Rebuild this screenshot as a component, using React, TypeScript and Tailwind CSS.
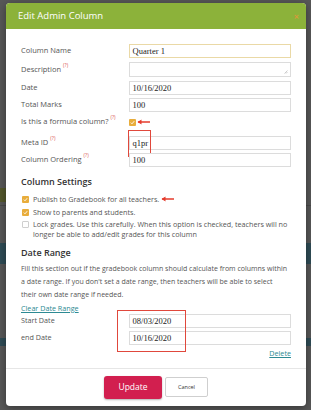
import React from 'react'

const sans = { fontFamily: '"Open Sans", "Liberation Sans", sans-serif' }
const serif = { fontFamily: '"Liberation Serif", "DejaVu Serif", serif' }

function Tip() {
  return <sup className="text-[5px] text-[#d9534f] ml-[2px] align-top relative top-[1px]">(?)</sup>
}

function Arrow({ className }: { className?: string }) {
  return (
    <svg width="14" height="6" viewBox="0 0 14 6" className={className}>
      <path d="M1 3 H13" stroke="#e53b2c" strokeWidth="1.4" />
      <path d="M0.5 3 L4.5 0.6 L4.5 5.4 Z" fill="#e53b2c" />
    </svg>
  )
}

function Check({ on }: { on?: boolean }) {
  return on ? (
    <span className="w-[7px] h-[7px] rounded-[1px] bg-[#e8ad3c] flex items-center justify-center shrink-0">
      <svg width="5" height="5" viewBox="0 0 5 5">
        <path d="M0.8 2.6 L2 3.8 L4.2 1.2" stroke="white" strokeWidth="0.9" fill="none" />
      </svg>
    </span>
  ) : (
    <span className="block w-[7px] h-[7px] rounded-[1px] border border-[#cfcfcf] bg-white shrink-0" />
  )
}

function Field({ label, tip, value, mb = 'mb-[3px]', highlight, boxed }: any) {
  return (
    <div className={`flex items-center ${mb}`}>
      <div className="w-[108px] text-[7.5px] text-[#555]">
        {label}
        {tip && <Tip />}
      </div>
      <div
        className={`relative w-[163px] h-[14px] border ${highlight ? 'border-[#ead9a6]' : 'border-[#dcdcdc]'} bg-white flex items-center px-[3px] text-[8.5px] text-[#222]`}
        style={serif}
      >
        {boxed && <span className="absolute left-[-2px] top-[-7px] w-[23px] h-[27px] border border-[#e0483c]" />}
        {value}
      </div>
    </div>
  )
}

export default function App() {
  return (
    <div className="relative w-[311px] h-[410px] bg-[#585858] overflow-hidden" style={sans}>
      {/* dimmed page behind */}
      <div className="absolute left-0 top-[243px] w-full h-[21px] bg-[#2f4c56]" />
      <div className="absolute left-0 top-[338px] w-full h-[8px] bg-[#2f4c56]" />
      <div className="absolute left-0 top-[188px] w-[8px] h-[14px] bg-[#54582c]" />
      <div className="absolute left-0 top-[205px] w-full h-px bg-[#4a4a4a]" />

      <div className="absolute left-[6px] top-[3px] w-[300px] h-[403px] bg-white rounded-[4px] shadow-[0_2px_8px_rgba(0,0,0,0.4)] overflow-hidden flex flex-col">
        <div className="h-[26px] bg-[#8cb23a] flex items-center justify-between pl-[12px] pr-[7px] shrink-0">
          <span className="text-[9.5px] text-white">Edit Admin Column</span>
          <span className="text-[9px] text-[#e8923a] leading-none">×</span>
        </div>

        <div className="px-[15px] pt-[15px] flex-1">
          <Field label="Column Name" value="Quarter 1" highlight mb="mb-[4px]" />
          <div className="flex items-start mb-[4px]">
            <div className="w-[108px] text-[7.5px] text-[#555] pt-[2px]">
              Description
              <Tip />
            </div>
            <div className="relative w-[163px] h-[15px] border border-[#dcdcdc] bg-white">
              <svg width="4" height="4" viewBox="0 0 4 4" className="absolute right-[2px] bottom-[2px]">
                <path d="M0.5 3.5 L3.5 0.5 M2 3.5 L3.5 2" stroke="#999" strokeWidth="0.5" />
              </svg>
            </div>
          </div>
          <Field label="Date" value="10/16/2020" mb="mb-[3px]" />
          <Field label="Total Marks" value="100" mb="mb-[6px]" />

          <div className="flex items-center h-[8px] mb-[10px]">
            <div className="w-[108px] text-[7.5px] text-[#555]">
              Is this a formula column?
              <Tip />
            </div>
            <Check on />
            <Arrow className="ml-[1px]" />
          </div>

          <Field label="Meta ID" tip value="q1pr" mb="mb-[3px]" boxed />
          <Field label="Column Ordering" tip value="100" mb="mb-[9px]" />

          <div className="text-[9px] leading-[12px] font-semibold text-[#333] mb-[7px]">Column Settings</div>

          <div className="flex flex-col gap-[5px] text-[7.2px] text-[#555] pl-[1px]">
            <div className="flex items-center gap-[4px] h-[8px]">
              <Check on />
              <span>Publish to Gradebook for all teachers.</span>
              <Arrow className="-ml-[2px]" />
            </div>
            <div className="flex items-center gap-[4px] h-[8px]">
              <Check on />
              <span>Show to parents and students.</span>
            </div>
            <div className="flex items-start gap-[4px] leading-[10px] -mt-[2px]">
              <span className="mt-[2px]">
                <Check />
              </span>
              <span className="pr-[2px]">
                Lock grades. Use this carefully. When this option is checked, teachers will no longer be able to
                add/edit grades for this column
              </span>
            </div>
          </div>

          <div className="text-[9px] leading-[12px] font-semibold text-[#333] mt-[8px] mb-[3px]">Date Range</div>
          <p className="text-[7px] text-[#555] leading-[13px] whitespace-nowrap">
            Fill this section out if the gradebook column should calculate from columns within
            <br />
            a date range. If you don't set a date range, then teachers will be able to select
            <br />
            their own date range if needed.
          </p>

          <div className="text-[7.2px] text-[#2d8a93] underline mt-[3px] leading-[9px]">Clear Date Range</div>

          <div className="relative mt-[1px]">
            <span className="absolute left-[96px] top-[-4px] w-[69px] h-[42px] border border-[#e0483c] pointer-events-none" />
            <div className="flex items-center mb-[3px]">
              <div className="w-[108px] text-[7.2px] text-[#555] -mt-[1px]">Start Date</div>
              <div className="w-[163px] h-[14px] border border-[#dcdcdc] flex items-center px-[3px] text-[8.5px] text-[#222]" style={serif}>
                08/03/2020
              </div>
            </div>
            <div className="flex items-center">
              <div className="w-[108px] text-[7.2px] text-[#555] -mt-[1px]">end Date</div>
              <div className="w-[163px] h-[14px] border border-[#dcdcdc] flex items-center px-[3px] text-[8.5px] text-[#222]" style={serif}>
                10/16/2020
              </div>
            </div>
          </div>
          <div className="text-right text-[7.2px] text-[#2d8a93] underline mt-[3px] leading-[10px]">Delete</div>
        </div>

        <div className="border-t border-[#e6e6e6] h-[38px] flex items-start justify-center gap-[3px] pt-[7px] shrink-0">
          <div className="w-[58px] h-[23px] rounded-[3px] bg-[#d21f4f] text-white text-[8.5px] flex items-center justify-center shadow-[0_1px_2px_rgba(0,0,0,0.3)]">
            Update
          </div>
          <div className="w-[43px] h-[20px] mt-[1px] rounded-[2px] border border-[#cfcfcf] bg-white text-[5.5px] text-[#333] flex items-center justify-center">
            Cancel
          </div>
        </div>
      </div>
    </div>
  )
}
